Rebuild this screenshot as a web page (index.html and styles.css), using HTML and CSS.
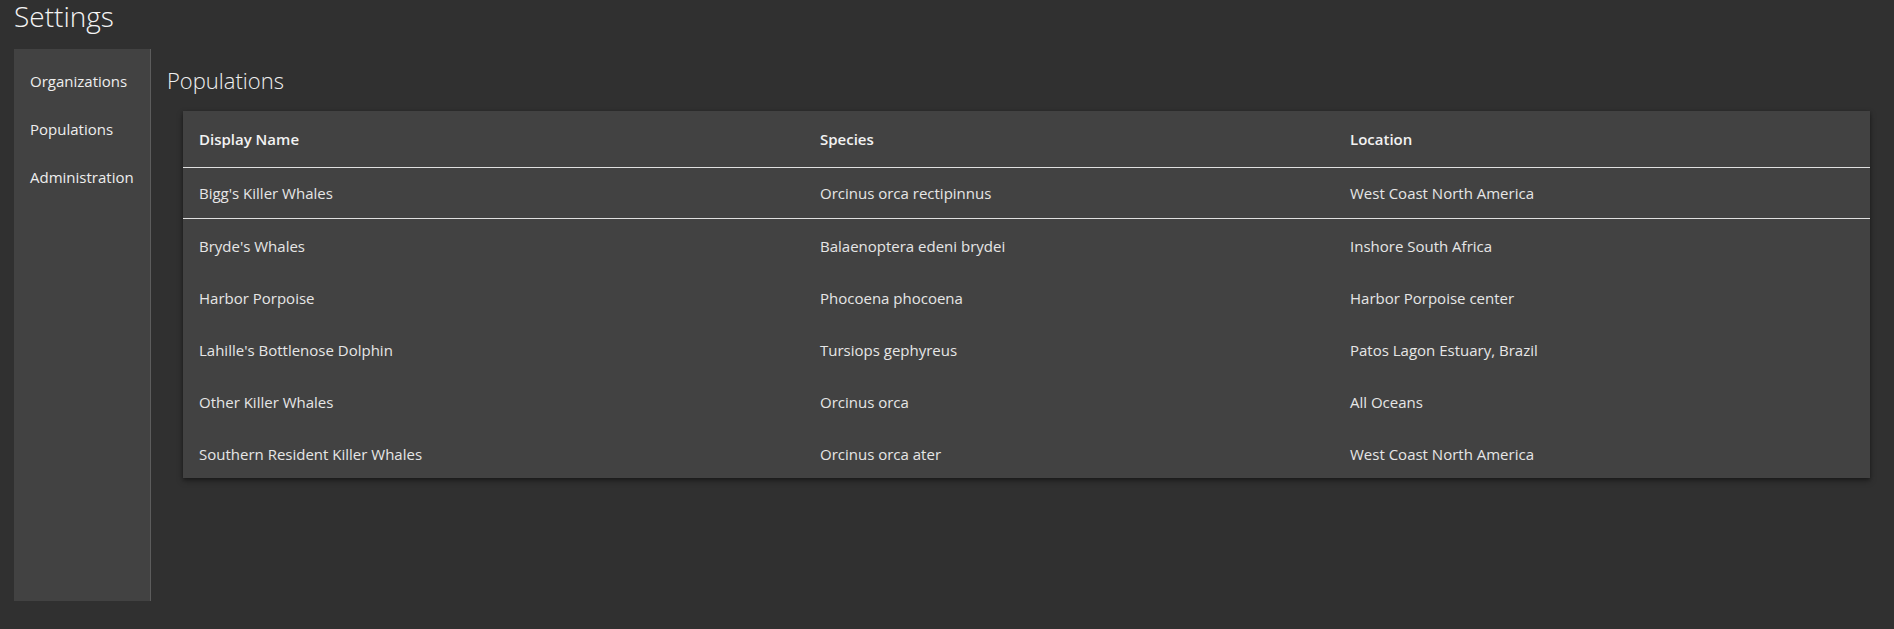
FILE: index.html
```html
<!DOCTYPE html>
<html>
<head>
<meta charset="utf-8">
<link rel="stylesheet" href="styles.css">
</head>
<body>
<h1 class="page-title">Settings</h1>
<div class="layout">
  <nav class="sidebar">
    <a class="nav-item">Organizations</a>
    <a class="nav-item">Populations</a>
    <a class="nav-item">Administration</a>
  </nav>
  <main class="content">
    <h2 class="section-title">Populations</h2>
    <table class="data-table">
      <colgroup><col class="c1"><col class="c2"><col class="c3"></colgroup>
      <thead>
        <tr class="head-row"><th>Display Name</th><th>Species</th><th>Location</th></tr>
      </thead>
      <tbody>
        <tr class="row first"><td>Bigg's Killer Whales</td><td>Orcinus orca rectipinnus</td><td>West Coast North America</td></tr>
        <tr class="row"><td>Bryde's Whales</td><td>Balaenoptera edeni brydei</td><td>Inshore South Africa</td></tr>
        <tr class="row"><td>Harbor Porpoise</td><td>Phocoena phocoena</td><td>Harbor Porpoise center</td></tr>
        <tr class="row"><td>Lahille's Bottlenose Dolphin</td><td>Tursiops gephyreus</td><td>Patos Lagon Estuary, Brazil</td></tr>
        <tr class="row"><td>Other Killer Whales</td><td>Orcinus orca</td><td>All Oceans</td></tr>
        <tr class="row"><td>Southern Resident Killer Whales</td><td>Orcinus orca ater</td><td>West Coast North America</td></tr>
      </tbody>
    </table>
  </main>
</div>
</body>
</html>
```
FILE: styles.css
```css
html, body {
  margin: 0;
  padding: 0;
  background: #303030;
  color: #ececec;
  font-family: "Open Sans", "Liberation Sans", sans-serif;
}
body {
  height: 629px;
  overflow: hidden;
}
.page-title {
  margin: 0 0 17px 14px;
  font-size: 28px;
  line-height: 32px;
  font-weight: 300;
  color: #f4f4f4;
}
.layout {
  display: flex;
  height: 552px;
  padding-left: 14px;
}
.sidebar {
  width: 136px;
  background: #424242;
  border-right: 1px solid #5c5c5c;
  padding-top: 8px;
  display: flex;
  flex-direction: column;
}
.nav-item {
  display: block;
  height: 48px;
  line-height: 48px;
  padding-left: 16px;
  font-size: 15px;
  color: #eeeeee;
}
.content {
  flex: 1;
  padding: 0 24px 0 16px;
}
.section-title {
  margin: 0;
  height: 62px;
  line-height: 62px;
  font-size: 22px;
  font-weight: 300;
  color: #f0f0f0;
}
.data-table {
  margin-left: 16px;
  width: 1687px;
  border-collapse: collapse;
  table-layout: fixed;
  background: #424242;
  box-shadow: 0 3px 6px rgba(0,0,0,0.35), 0 1px 3px rgba(0,0,0,0.25);
  font-size: 15px;
}
.c1 { width: 621px; }
.c2 { width: 530px; }
.data-table th,
.data-table td {
  box-sizing: border-box;
  padding: 0 0 0 16px;
  text-align: left;
  white-space: nowrap;
  vertical-align: middle;
}
.data-table th {
  height: 56px;
  font-weight: 600;
  color: #f2f2f2;
  border-bottom: 1px solid #e0e0e0;
}
.data-table td {
  height: 52px;
  padding-top: 4px;
  color: #e6e6e6;
}
.row.first td {
  height: 51px;
  padding-top: 0;
  border-bottom: 1px solid #e0e0e0;
}
```
